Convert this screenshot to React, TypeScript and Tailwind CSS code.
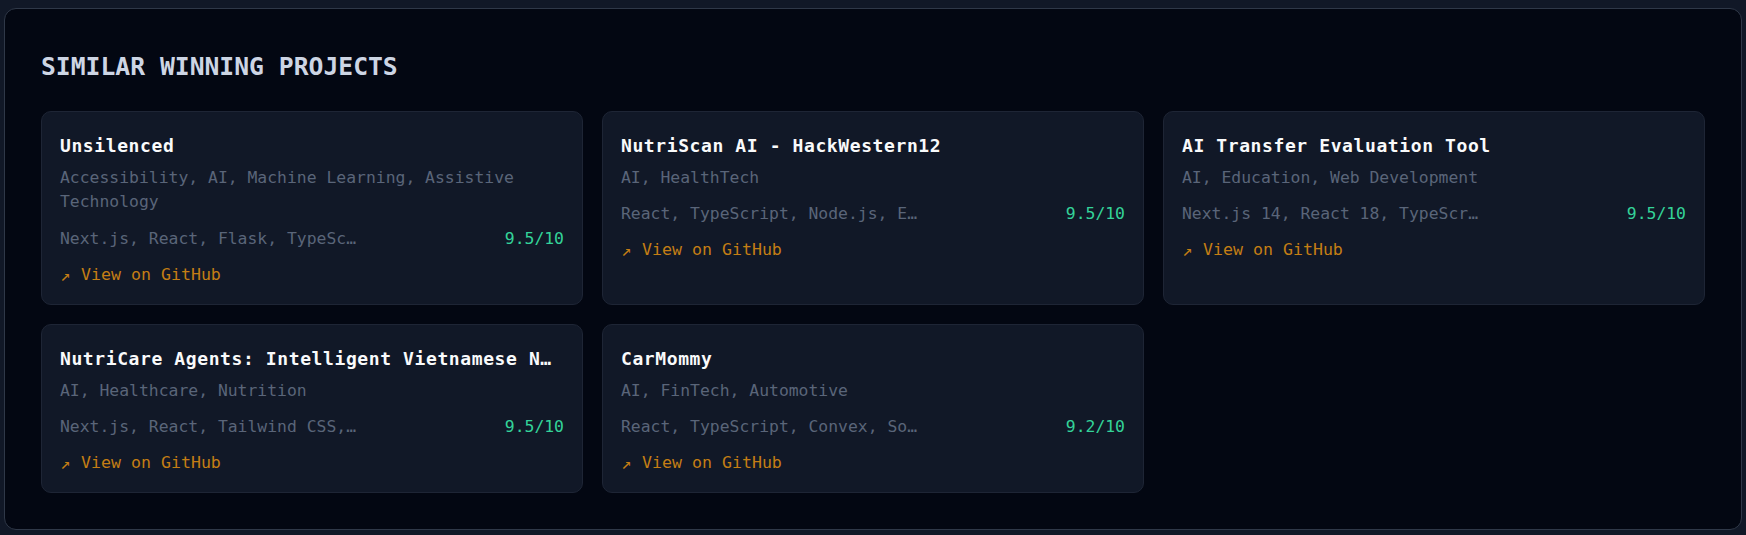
import React from "react";

type Project = {
  name: string;
  tags: string;
  tech: string;
  score: string;
};

const projects: Project[] = [
  {
    name: "Unsilenced",
    tags: "Accessibility, AI, Machine Learning, Assistive Technology",
    tech: "Next.js, React, Flask, TypeSc…",
    score: "9.5/10",
  },
  {
    name: "NutriScan AI - HackWestern12",
    tags: "AI, HealthTech",
    tech: "React, TypeScript, Node.js, E…",
    score: "9.5/10",
  },
  {
    name: "AI Transfer Evaluation Tool",
    tags: "AI, Education, Web Development",
    tech: "Next.js 14, React 18, TypeScr…",
    score: "9.5/10",
  },
  {
    name: "NutriCare Agents: Intelligent Vietnamese N…",
    tags: "AI, Healthcare, Nutrition",
    tech: "Next.js, React, Tailwind CSS,…",
    score: "9.5/10",
  },
  {
    name: "CarMommy",
    tags: "AI, FinTech, Automotive",
    tech: "React, TypeScript, Convex, So…",
    score: "9.2/10",
  },
];

function Card({ p }: { p: Project }) {
  return (
    <div className="min-w-0 rounded-[10px] border border-[#1e2535] bg-[#111827] px-[18px] pt-[18px] pb-[17px]">
      <div className="whitespace-nowrap text-[18px] font-bold leading-[31px] tracking-[0.6px] text-[#f9fafb]">
        {p.name}
      </div>
      <div className="mt-[5px] text-[16.4px] leading-[24.4px] text-[#5a6579]">{p.tags}</div>
      <div className="mt-[12px] flex items-center justify-between text-[16.4px] leading-[24px]">
        <span className="whitespace-nowrap text-[#5a6579]">{p.tech}</span>
        <span className="text-[#34d399]">{p.score}</span>
      </div>
      <div className="mt-[12px] flex h-[24px] items-center text-[16.6px] leading-[24px] text-[#c47e14]">
        <span className="w-[21px] text-[17px] leading-[24px]">↗</span>
        <span>View on GitHub</span>
      </div>
    </div>
  );
}

export default function App() {
  return (
    <div
      className="min-h-screen bg-[#111827] px-[4px] pt-[8px] pb-[6px]"
      style={{ fontFamily: '"DejaVu Sans Mono", "Liberation Mono", monospace' }}
    >
      <div className="rounded-[12px] border border-[#2f3848] bg-[#030712] px-[36px] pt-[40px] pb-[36px]">
        <h2 className="mb-[26px] text-[24.7px] font-bold leading-[36px] text-[#cdd5e4]">
          SIMILAR WINNING PROJECTS
        </h2>
        <div className="grid grid-cols-3 gap-[19px]">
          {projects.map((p) => (
            <Card key={p.name} p={p} />
          ))}
        </div>
      </div>
    </div>
  );
}
